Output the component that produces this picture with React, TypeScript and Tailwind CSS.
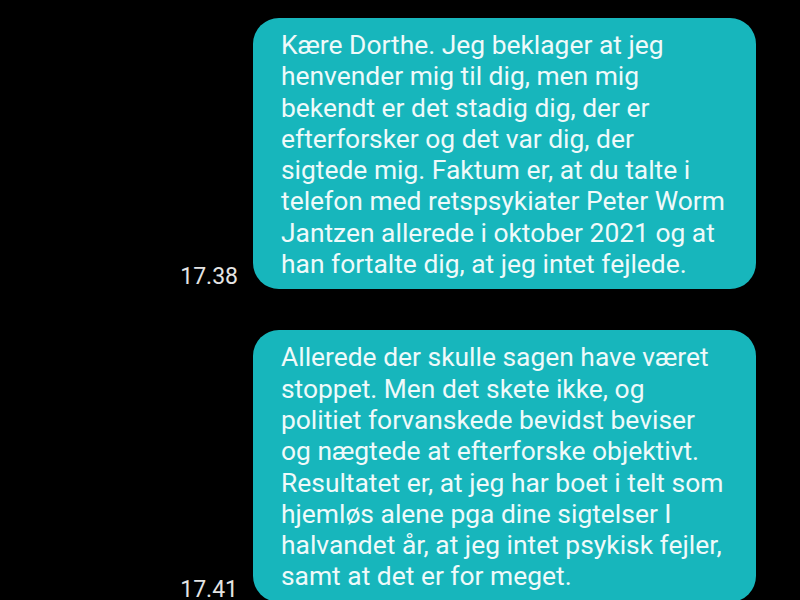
import React from 'react';

type Msg = { time: string; lines: string[] };

const messages: Msg[] = [
  {
    time: '17.38',
    lines: [
      'Kære Dorthe. Jeg beklager at jeg',
      'henvender mig til dig, men mig',
      'bekendt er det stadig dig, der er',
      'efterforsker og det var dig, der',
      'sigtede mig. Faktum er, at du talte i',
      'telefon med retspsykiater Peter Worm',
      'Jantzen allerede i oktober 2021 og at',
      'han fortalte dig, at jeg intet fejlede.',
    ],
  },
  {
    time: '17.41',
    lines: [
      'Allerede der skulle sagen have været',
      'stoppet. Men det skete ikke, og',
      'politiet forvanskede bevidst beviser',
      'og nægtede at efterforske objektivt.',
      'Resultatet er, at jeg har boet i telt som',
      'hjemløs alene pga dine sigtelser I',
      'halvandet år, at jeg intet psykisk fejler,',
      'samt at det er for meget.',
    ],
  },
];

const Bubble: React.FC<{ msg: Msg }> = ({ msg }) => (
  <div className="flex items-end justify-end gap-[15px] pr-[44px]">
    <span className="text-[23px] leading-none text-[#e4e4e4] pb-[1px]">{msg.time}</span>
    <div className="w-[503px] shrink-0 rounded-[26px] bg-[#17b6bc] pl-[28px] pr-4 pt-[12px] pb-[9px] text-[26.4px] leading-[31.3px] text-[#effafa]">
      {msg.lines.map((l, i) => (
        <div key={i} className="whitespace-nowrap">
          {l}
        </div>
      ))}
    </div>
  </div>
);

export default function App() {
  return (
    <div
      className="w-[800px] h-[600px] overflow-hidden bg-black pt-[18px] flex flex-col gap-[41px]"
      style={{ fontFamily: 'Roboto, "Noto Sans", sans-serif' }}
    >
      {messages.map((m) => (
        <Bubble key={m.time} msg={m} />
      ))}
    </div>
  );
}
